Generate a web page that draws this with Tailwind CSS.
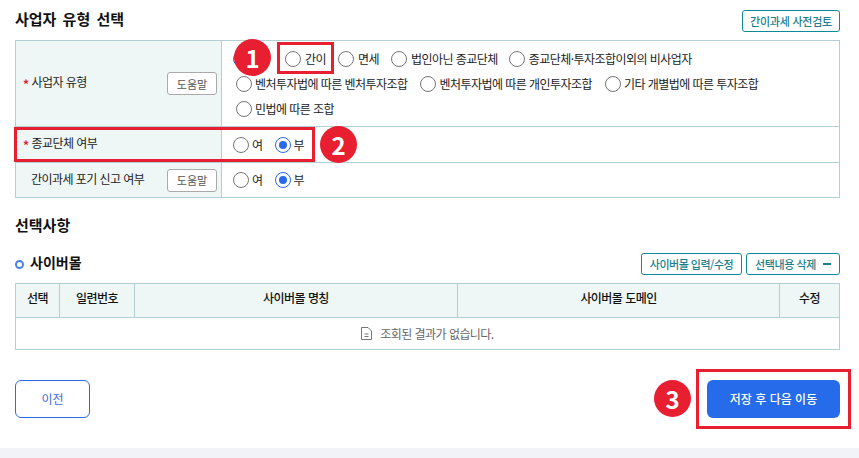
<!DOCTYPE html>
<html lang="ko">
<head>
    <meta charset="UTF-8">
    <title>사업자 유형 선택</title>
    <script src="https://cdn.jsdelivr.net/npm/@tailwindcss/browser@4"></script>
</head>
<body class="relative h-[458px] w-[859px] overflow-hidden bg-white font-['Noto_Sans_CJK_KR','Noto_Sans',sans-serif] text-[12px] tracking-[-0.55px] text-[#222]">
    <div class="h-[448px] pl-[15px] pr-[19px]">
        <!-- header -->
        <div class="flex h-[40px] items-start justify-between pt-[9px]">
            <h2 class="text-[15px] leading-[20px] font-bold tracking-normal text-[#111] [word-spacing:2px]">사업자 유형 선택</h2>
            <button class="mt-[1px] h-[22px] w-[98px] rounded-[3px] border border-[#0f8a9a] text-[11px] leading-[18px] font-medium tracking-[-0.25px] text-[#1b7f8e]">간이과세 사전검토</button>
        </div>

        <!-- type table -->
        <div class="border border-[#b2d0d4]">
            <div class="flex h-[86px] border-b border-[#b2d0d4]">
                <div class="flex w-[206px] shrink-0 items-center justify-between border-r border-[#b2d0d4] bg-[#eef7f6] pr-[4px] pl-[7px]">
                    <span class="pb-[2px]"><span class="mr-[3px] align-[-2px] font-bold text-[#e0203a]">*</span>사업자 유형</span>
                    <button class="h-[23px] w-[50px] rounded-[3px] border border-[#aaa] bg-white text-[11px] leading-[20px] tracking-normal text-[#555]">도움말</button>
                </div>
                <div class="flex-1 pt-[5px]">
                    <div class="flex h-[25px] items-center pl-[11px]">
                        <!-- selected radio that sits under the "1" marker, its label is fully covered -->
                        <span class="mr-[24px] flex h-[16px] w-[16px] items-center justify-center rounded-full border border-[#2a6ae8]"><span class="h-[8px] w-[8px] rounded-full bg-[#2a6ae8]"></span></span>
                        <label class="ml-[12px] flex items-center gap-[4px]"><span class="h-[16px] w-[16px] rounded-full border border-[#777]"></span>간이</label>
                        <label class="ml-[12px] flex items-center gap-[4px]"><span class="h-[16px] w-[16px] rounded-full border border-[#777]"></span>면세</label>
                        <label class="ml-[12px] flex items-center gap-[4px]"><span class="h-[16px] w-[16px] rounded-full border border-[#777]"></span>법인아닌 종교단체</label>
                        <label class="ml-[11px] flex items-center gap-[4px]"><span class="h-[16px] w-[16px] rounded-full border border-[#777]"></span>종교단체·투자조합이외의 비사업자</label>
                    </div>
                    <div class="flex h-[25px] items-center pl-[14px]">
                        <label class="flex items-center gap-[3px]"><span class="h-[16px] w-[16px] rounded-full border border-[#777]"></span>벤처투자법에 따른 벤처투자조합</label>
                        <label class="ml-[13px] flex items-center gap-[3px]"><span class="h-[16px] w-[16px] rounded-full border border-[#777]"></span>벤처투자법에 따른 개인투자조합</label>
                        <label class="ml-[13px] flex items-center gap-[3px]"><span class="h-[16px] w-[16px] rounded-full border border-[#777]"></span>기타 개별법에 따른 투자조합</label>
                    </div>
                    <div class="flex h-[25px] items-center pl-[14px]">
                        <label class="flex items-center gap-[3px]"><span class="h-[16px] w-[16px] rounded-full border border-[#777]"></span>민법에 따른 조합</label>
                    </div>
                </div>
            </div>
            <div class="flex h-[36px] border-b border-[#b2d0d4]">
                <div class="flex w-[206px] shrink-0 items-center border-r border-[#b2d0d4] bg-[#eef7f6] pl-[7px]">
                    <span class="pb-[2px]"><span class="mr-[3px] align-[-2px] font-bold text-[#e0203a]">*</span>종교단체 여부</span>
                </div>
                <div class="flex flex-1 items-center pl-[11px]">
                    <label class="flex items-center gap-[3px]"><span class="h-[16px] w-[16px] rounded-full border border-[#777]"></span>여</label>
                    <label class="ml-[12px] flex items-center gap-[3px]"><span class="flex h-[16px] w-[16px] items-center justify-center rounded-full border border-[#2a6ae8]"><span class="h-[8px] w-[8px] rounded-full bg-[#2a6ae8]"></span></span>부</label>
                </div>
            </div>
            <div class="flex h-[34px]">
                <div class="flex w-[206px] shrink-0 items-center justify-between border-r border-[#b2d0d4] bg-[#eef7f6] pr-[4px] pl-[15px]">
                    <span class="pb-[2px]">간이과세 포기 신고 여부</span>
                    <button class="h-[23px] w-[50px] rounded-[3px] border border-[#aaa] bg-white text-[11px] leading-[20px] tracking-normal text-[#555]">도움말</button>
                </div>
                <div class="flex flex-1 items-center pl-[11px]">
                    <label class="flex items-center gap-[3px]"><span class="h-[16px] w-[16px] rounded-full border border-[#777]"></span>여</label>
                    <label class="ml-[12px] flex items-center gap-[3px]"><span class="flex h-[16px] w-[16px] items-center justify-center rounded-full border border-[#2a6ae8]"><span class="h-[8px] w-[8px] rounded-full bg-[#2a6ae8]"></span></span>부</label>
                </div>
            </div>
        </div>

        <h2 class="mt-[17px] text-[15px] leading-[20px] font-bold tracking-normal text-[#111]">선택사항</h2>

        <!-- cyber mall -->
        <div class="mt-[18px] flex h-[22px] items-center justify-between">
            <div class="flex items-center gap-[6px]">
                <span class="h-[9px] w-[9px] rounded-full border-[2.5px] border-[#4a80e8]"></span>
                <span class="pb-[3px] text-[14px] font-bold tracking-normal text-[#111]">사이버몰</span>
            </div>
            <div class="flex gap-[4px]">
                <button class="h-[22px] w-[101px] rounded-[3px] border border-[#0f8a9a] text-[11px] leading-[18px] font-medium tracking-[-0.5px] text-[#1b7f8e]">사이버몰 입력/수정</button>
                <button class="flex h-[22px] w-[94px] items-center justify-center gap-[7px] rounded-[3px] border border-[#0f8a9a] text-[11px] font-medium tracking-[-0.4px] text-[#1b7f8e]">선택내용 삭제<span class="h-[1.5px] w-[8px] bg-[#1b7f8e]"></span></button>
            </div>
        </div>

        <div class="mt-[8px] border border-[#b2d0d4]">
            <div class="flex h-[34px] border-b border-[#b2d0d4] bg-[#eef7f6] text-center leading-[28px] font-medium text-[#111]">
                <div class="w-[44px] border-r border-[#b2d0d4]">선택</div>
                <div class="w-[75px] border-r border-[#b2d0d4]">일련번호</div>
                <div class="w-[323px] border-r border-[#b2d0d4]">사이버몰 명칭</div>
                <div class="w-[322px] border-r border-[#b2d0d4]">사이버몰 도메인</div>
                <div class="flex-1">수정</div>
            </div>
            <div class="flex h-[31px] items-center justify-center gap-[8px] text-[#666]">
                <svg class="h-[13px] w-[11px]" viewBox="0 0 11 13" fill="none" stroke="#777" stroke-width="1">
                    <path d="M.5 .5h6.500l3.500 3.500v8.500h-10z"/>
                    <path d="M3.500 7h4M3.500 9.500h4"/>
                </svg>
                <span>조회된 결과가 없습니다.</span>
            </div>
        </div>

        <div class="mt-[30px] flex justify-between">
            <button class="h-[38px] w-[75px] rounded-[6px] border border-[#2a6ae8] text-[12px] tracking-normal text-[#3a6ae0]">이전</button>
            <button class="h-[38px] w-[133px] rounded-[6px] bg-[#266bea] text-[12px] font-medium tracking-normal text-white">저장 후 다음 이동</button>
        </div>
    </div>
    <div class="h-[10px] bg-[#f1f3f8]"></div>

    <!-- annotations over the page -->
    <div class="absolute top-[42px] left-[277px] h-[32px] w-[57px] border-[3px] border-[#e81f30]"></div>
    <div class="absolute top-[127px] left-[14px] h-[35px] w-[301px] border-[3px] border-[#e81f30]"></div>
    <div class="absolute top-[369px] left-[696px] h-[60px] w-[155px] border-[3px] border-[#e81f30]"></div>
    <div class="absolute top-[39px] left-[234px] flex h-[37px] w-[37px] items-center justify-center rounded-full bg-[#e81f30] text-[24px] font-bold tracking-normal text-white">1</div>
    <div class="absolute top-[126px] left-[320px] flex h-[37px] w-[37px] items-center justify-center rounded-full bg-[#e81f30] text-[24px] font-bold tracking-normal text-white">2</div>
    <div class="absolute top-[380px] left-[654px] flex h-[37px] w-[37px] items-center justify-center rounded-full bg-[#e81f30] text-[24px] font-bold tracking-normal text-white">3</div>
</body>
</html>
